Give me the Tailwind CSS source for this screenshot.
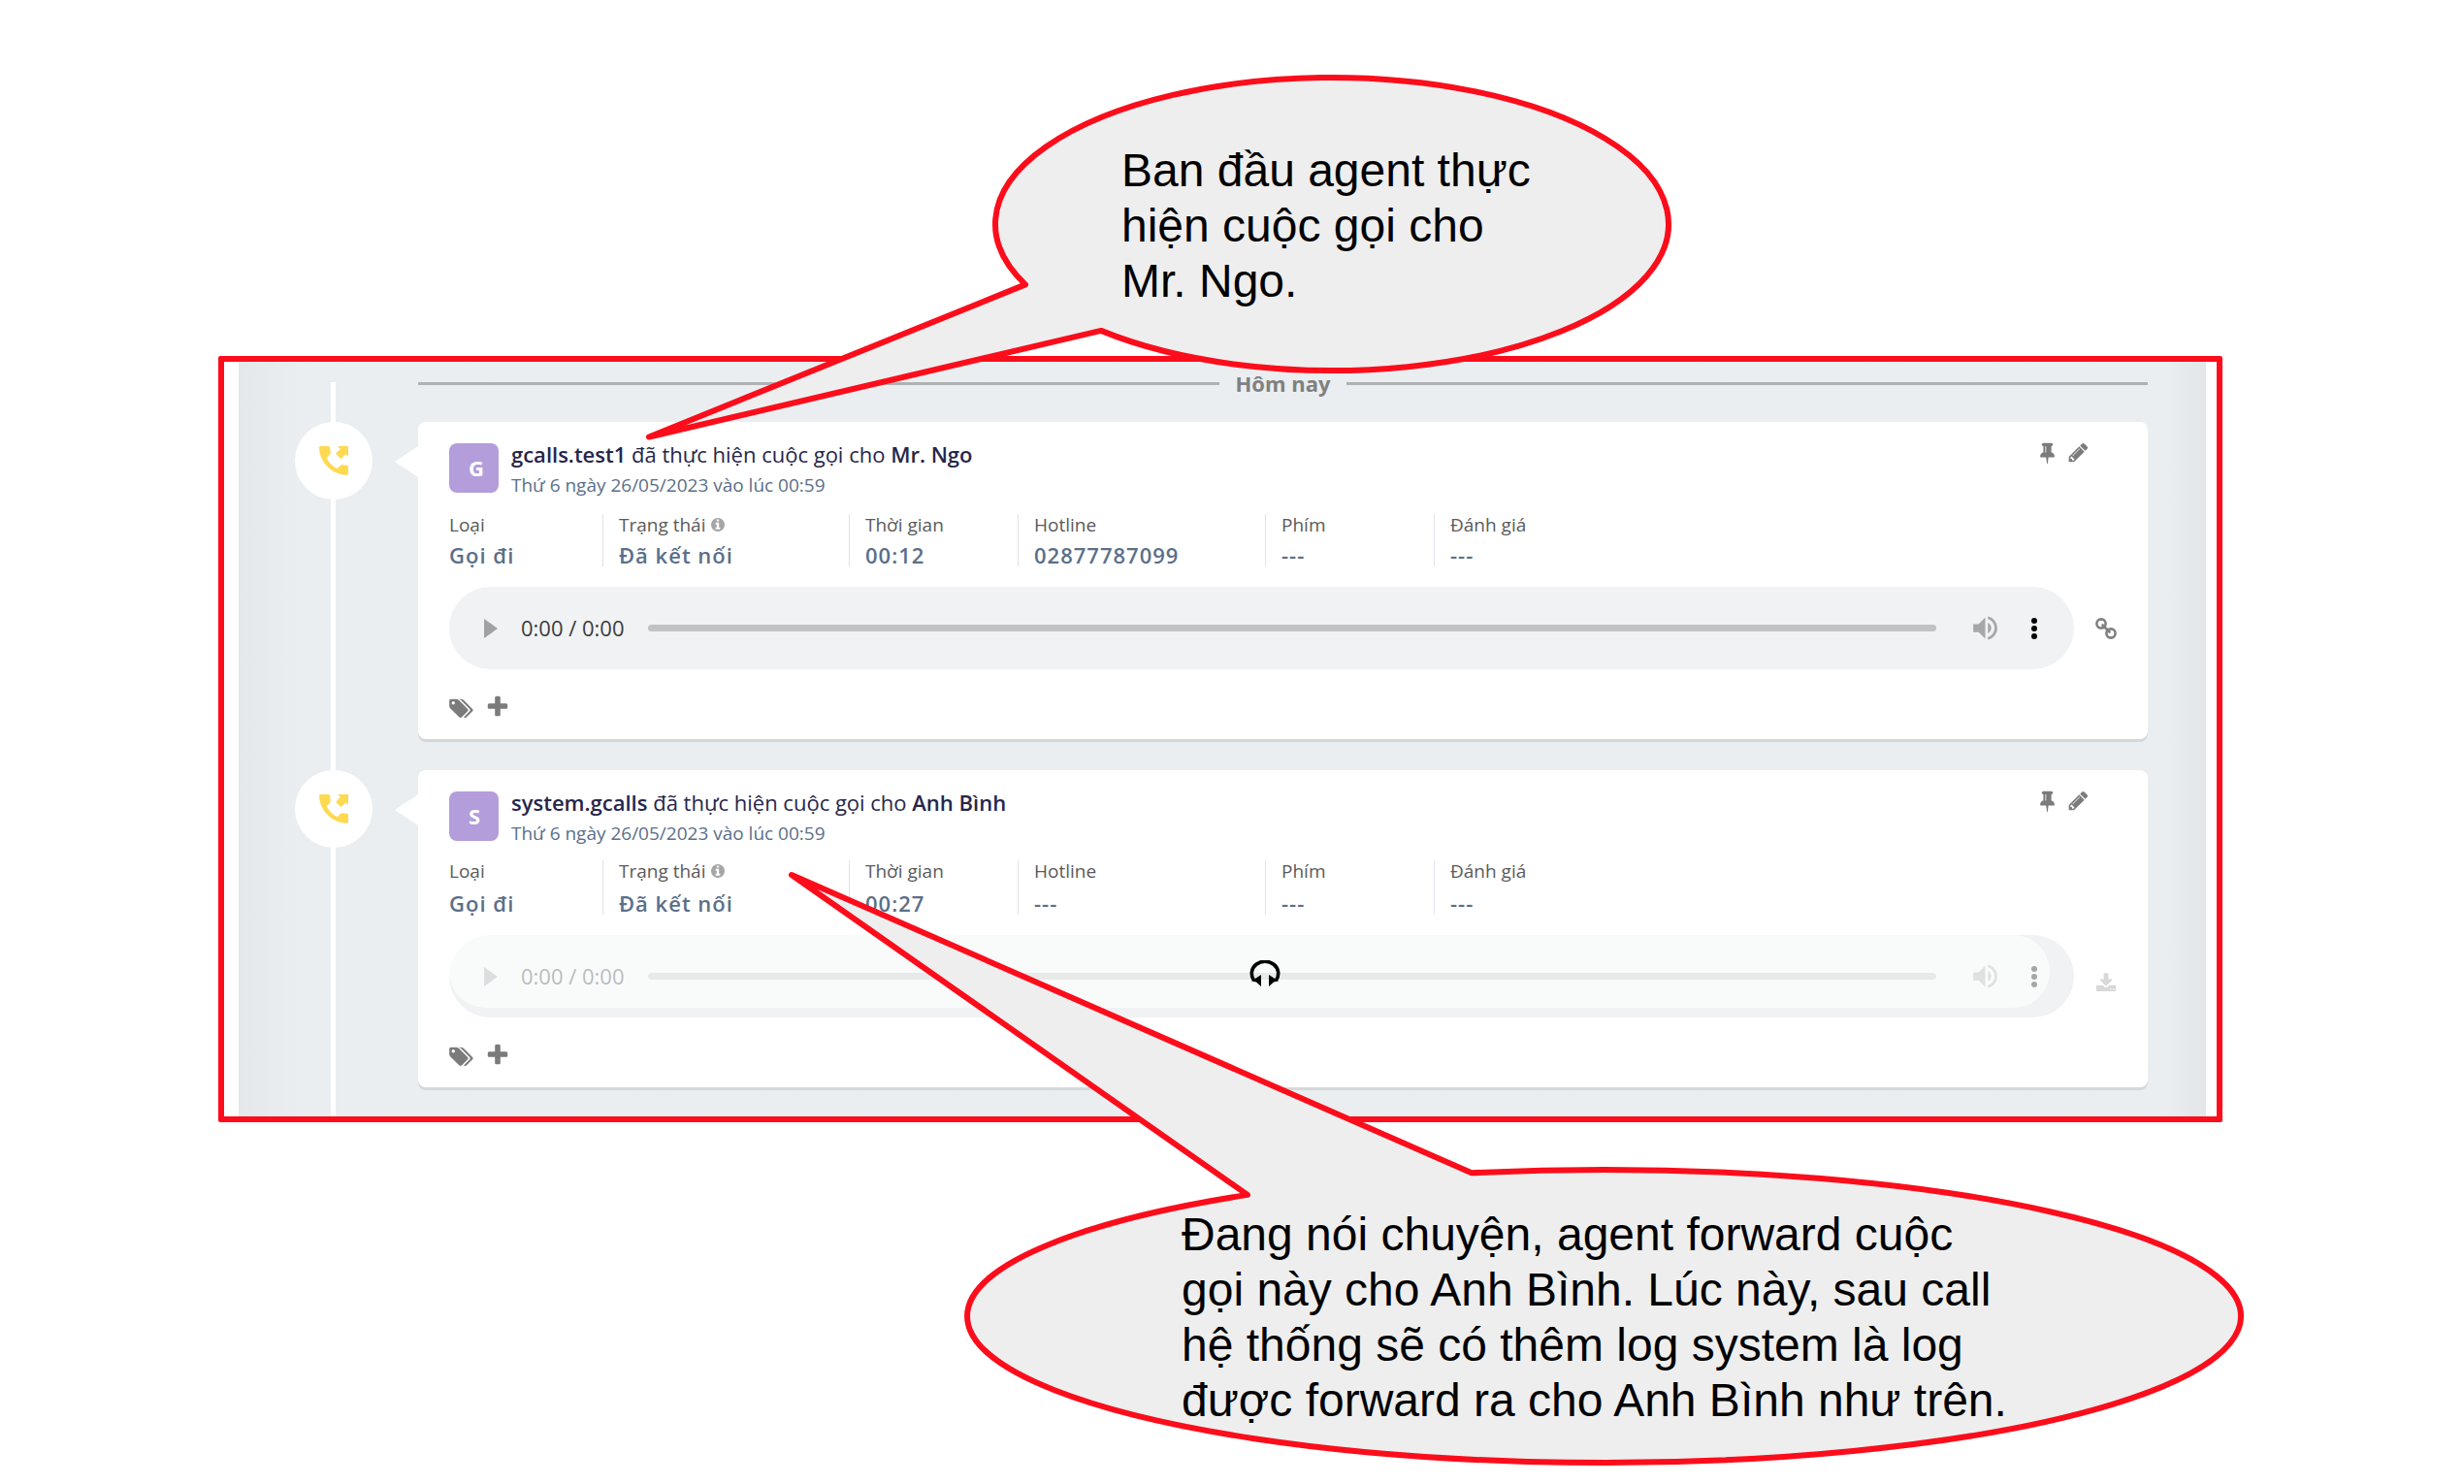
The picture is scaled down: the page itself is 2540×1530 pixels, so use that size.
<!DOCTYPE html>
<html lang="vi">
<head>
<meta charset="utf-8">
<meta name="viewport" content="width=device-width, initial-scale=1">
<title>Lịch sử cuộc gọi</title>
<script src="https://cdn.jsdelivr.net/npm/@tailwindcss/browser@4"></script>
</head>
<body class="bg-white font-['Open_Sans',sans-serif]">

<!-- Icon set -->
<svg class="hidden" aria-hidden="true">
  <symbol id="call" viewBox="0 0 24 24"><path d="M20.200 14.800l-2.600-.300a1.800 1.800 0 0 0-1.500.500l-1.900 1.900a15 15 0 0 1-6.600-6.600l1.900-1.900c.400-.400.600-1 .500-1.500L9.700 3.900A1 1 0 0 0 8.700 3H4C3.400 3 3 3.500 3 4.100 3.500 13.400 10.700 20.500 20 20.900c.600 0 1-.400 1-1v-4.100a1 1 0 0 0-.800-1zM14.400 3H21v6.600l-1.600-1.600-2.900 2.900-3.200-3.200L16.100 4.700z"/></symbol>
  <symbol id="pin" viewBox="0 0 1792 1792"><path d="M800 864v-448q0-14-9-23t-23-9-23 9-9 23v448q0 14 9 23t23 9 23-9 9-23zm672 352q0 26-19 45t-45 19h-429l-51 483q-2 12-10.500 20.500t-20.500 8.500h-1q-27 0-32-27l-76-485h-404q-26 0-45-19t-19-45q0-123 78.500-221.500t177.500-98.500v-512q-52 0-90-38t-38-90 38-90 90-38h640q52 0 90 38t38 90-38 90-90 38v512q99 0 177.500 98.500t78.500 221.500z"/></symbol>
  <symbol id="pencil" viewBox="0 0 1792 1792"><path d="M491 1536l91-91-235-235-91 91v107h128v128h107zm523-928q0-22-22-22-10 0-17 7l-542 542q-7 7-7 17 0 22 22 22 10 0 17-7l542-542q7-7 7-17zm-54-192l416 416-832 832h-416v-416zm683 96q0 53-37 90l-166 166-416-416 166-165q36-38 90-38 53 0 91 38l235 234q37 39 37 91z"/></symbol>
  <symbol id="info" viewBox="128 128 1536 1536"><path d="M1152 1376v-160q0-14-9-23t-23-9h-96v-512q0-14-9-23t-23-9h-320q-14 0-23 9t-9 23v160q0 14 9 23t23 9h96v320h-96q-14 0-23 9t-9 23v160q0 14 9 23t23 9h448q14 0 23-9t9-23zm-128-896v-160q0-14-9-23t-23-9h-192q-14 0-23 9t-9 23v160q0 14 9 23t23 9h192q14 0 23-9t9-23zm640 416q0 209-103 385.500t-279.500 279.500-385.500 103-385.500-103-279.500-279.500-103-385.500 103-385.500 279.500-279.500 385.500-103 385.500 103 279.500 279.500 103 385.500z"/></symbol>
  <symbol id="tags" viewBox="128 0 1920 1792"><path d="M576 448q0-53-37.500-90.500t-90.500-37.500-90.500 37.500-37.500 90.500 37.500 90.500 90.500 37.500 90.500-37.500 37.500-90.500zm1067 576q0 53-37 90l-491 492q-39 37-91 37-53 0-90-37l-715-716q-38-37-64.500-101t-26.500-117v-416q0-52 38-90t90-38h416q53 0 117 26.500t102 64.500l715 714q37 39 37 91zm384 0q0 53-37 90l-491 492q-39 37-91 37-36 0-59-14t-53-45l470-470q37-37 37-90 0-52-37-91l-715-714q-38-38-102-64.500t-117-26.500h224q53 0 117 26.500t102 64.500l715 714q37 39 37 91z"/></symbol>
  <symbol id="plus" viewBox="0 0 1792 1792"><path d="M1600 736v192q0 40-28 68t-68 28h-416v416q0 40-28 68t-68 28h-192q-40 0-68-28t-28-68v-416h-416q-40 0-68-28t-28-68v-192q0-40 28-68t68-28h416v-416q0-40 28-68t68-28h192q40 0 68 28t28 68v416h416q40 0 68 28t28 68z"/></symbol>
  <symbol id="download" viewBox="0 0 1792 1600"><path d="M1344 1344q0-26-19-45t-45-19-45 19-19 45 19 45 45 19 45-19 19-45zm256 0q0-26-19-45t-45-19-45 19-19 45 19 45 45 19 45-19 19-45zm128-224v320q0 40-28 68t-68 28h-1472q-40 0-68-28t-28-68v-320q0-40 28-68t68-28h465l135 136q58 56 136 56t136-56l136-136h464q40 0 68 28t28 68zm-325-569q17 41-14 70l-448 448q-18 19-45 19t-45-19l-448-448q-31-29-14-70 17-39 59-39h256v-448q0-26 19-45t45-19h256q26 0 45 19t19 45v448h256q42 0 59 39z"/></symbol>
  <symbol id="link" viewBox="0 0 22 22"><g fill="none" stroke="currentColor" stroke-width="2.600"><circle cx="6" cy="6" r="4.600"/><circle cx="16" cy="16" r="4.600"/><path d="M7.500 7.500l7 7" stroke-linecap="round"/></g></symbol>
  <symbol id="volume" viewBox="0 0 24 24"><path d="M3 9v6h4l5 5V4L7 9H3zm13.500 3c0-1.770-1.020-3.290-2.500-4.030v8.050c1.480-.730 2.500-2.250 2.500-4.020zM14 3.230v2.060c2.890.860 5 3.540 5 6.710s-2.110 5.850-5 6.710v2.060c4.010-.910 7-4.490 7-8.770s-2.990-7.860-7-8.770z"/></symbol>
  <symbol id="play" viewBox="0 0 14 20"><path d="M0 0l14 10L0 20z"/></symbol>
  <symbol id="dots" viewBox="0 0 8 24"><circle cx="4" cy="4" r="3"/><circle cx="4" cy="12" r="3"/><circle cx="4" cy="20" r="3"/></symbol>
  <symbol id="headphones" viewBox="0 0 32 28"><path d="M4.500 20.500A13.700 12.500 0 1 1 27.500 20.500" fill="none" stroke="currentColor" stroke-width="3.600"/><path d="M2 21.500L12 15v12l-5-4.500zM30 21.500L20 15v12l5-4.500z"/></symbol>
</svg>

<main class="relative pt-[367px] pl-[225px] pr-[249px] pb-[373px]">

  <!-- Call history -->
  <section class="rounded-xs border-6 border-[#fc0d1b] pl-[15px] pr-[11px]">
    <div class="relative bg-[#eaeef1] bg-linear-to-r from-[#e4e8eb] via-[#eaeef1] via-3% to-[#eaeef1] pl-[58px] pr-[60px] pt-[7px] pb-[30px]">
      <div class="absolute inset-y-0 right-0 w-10 bg-linear-to-l from-[#e2e6e9] to-[#eaeef1]"></div>
      <div class="absolute left-[95px] top-[21px] bottom-0 w-[5px] bg-white"></div>

      <h2 class="mb-[25px] ml-[127px] flex items-center gap-4 text-[22px] leading-[30px] font-bold text-[#808080] before:h-[3px] before:flex-1 before:bg-[#b0b1b2] after:h-[3px] after:flex-1 after:bg-[#b0b1b2]">Hôm nay</h2>

      <ol class="relative flex flex-col gap-8">
        <li class="flex gap-[47px]">
          <div class="flex size-20 shrink-0 items-center justify-center rounded-full bg-white text-[#ffd94f]"><svg class="size-10 fill-current"><use href="#call"/></svg></div>
          <article class="relative flex-1 rounded-lg bg-white px-8 pt-[17px] pb-5 shadow-[0_3px_0_#d4d8db]">
            <svg class="absolute top-[25px] -left-6 h-8 w-6 fill-white" viewBox="0 0 24 32"><path d="M24 0v32L0 16z"/></svg>
            <header class="flex">
              <div class="mt-[5px] mr-[13px] size-[51px] rounded-lg bg-[#b39ddb] pl-5 text-[22px] leading-[51px] font-bold text-white">G</div>
              <div class="flex-1 leading-8">
                <h3 class="text-[22px] text-[#27264a]"><b class="font-semibold">gcalls.test1</b> đã thực hiện cuộc gọi cho <b class="font-semibold">Mr. Ngo</b></h3>
                <p class="text-[19px] text-[#5b6f8a]">Thứ 6 ngày 26/05/2023 vào lúc 00:59</p>
              </div>
              <div class="mt-[3px] mr-7 flex items-start gap-[9px] text-[#7b7b7b]">
                <button type="button" aria-label="Ghim"><svg class="size-[23px] fill-current"><use href="#pin"/></svg></button>
                <button type="button" aria-label="Sửa"><svg class="size-[23px] fill-current"><use href="#pencil"/></svg></button>
              </div>
            </header>
            <dl class="mt-[14px] flex h-[54px] text-[#5b6f8a]">
              <div class="flex w-[158px] flex-col justify-between"><dt class="text-[19px] leading-[22px] text-[#5a5a5a]">Loại</dt><dd class="text-[22px] leading-6 font-semibold tracking-[1px]">Gọi đi</dd></div>
              <div class="flex w-[254px] flex-col justify-between border-l border-[#e0e3ef] pl-4"><dt class="flex items-center gap-[6px] text-[19px] leading-[22px] text-[#5a5a5a]">Trạng thái<svg class="size-[14px] fill-[#a6a6a6]"><use href="#info"/></svg></dt><dd class="text-[22px] leading-6 font-semibold tracking-[1px]">Đã kết nối</dd></div>
              <div class="flex w-[174px] flex-col justify-between border-l border-[#e0e3ef] pl-4"><dt class="text-[19px] leading-[22px] text-[#5a5a5a]">Thời gian</dt><dd class="text-[22px] leading-6 font-semibold tracking-[1px]">00:12</dd></div>
              <div class="flex w-[255px] flex-col justify-between border-l border-[#e0e3ef] pl-4"><dt class="text-[19px] leading-[22px] text-[#5a5a5a]">Hotline</dt><dd class="text-[22px] leading-6 font-semibold tracking-[1px]">02877787099</dd></div>
              <div class="flex w-[174px] flex-col justify-between border-l border-[#e0e3ef] pl-4"><dt class="text-[19px] leading-[22px] text-[#5a5a5a]">Phím</dt><dd class="text-[22px] leading-6 font-semibold tracking-[1px]">---</dd></div>
              <div class="flex flex-col justify-between border-l border-[#e0e3ef] pl-4"><dt class="text-[19px] leading-[22px] text-[#5a5a5a]">Đánh giá</dt><dd class="text-[22px] leading-6 font-semibold tracking-[1px]">---</dd></div>
            </dl>
            <div class="mt-[21px] flex items-center gap-[22px]">
              <div class="flex h-[85px] flex-1 items-center rounded-full bg-[#f0f2f4] pr-[37px] pl-9">
                <button type="button" aria-label="Phát"><svg class="h-5 w-[14px] fill-[#a0a2a3]"><use href="#play"/></svg></button>
                <span class="ml-6 w-[131px] pb-[2px] text-[22px] leading-8 text-[#3c3c3c]">0:00 / 0:00</span>
                <input type="range" value="0" aria-label="Tiến trình" class="h-[7px] min-w-0 flex-1 appearance-none rounded-full bg-[#c0c2c3] [&::-webkit-slider-thumb]:size-0 [&::-webkit-slider-thumb]:appearance-none">
                <button type="button" aria-label="Âm lượng" class="ml-[34px]"><svg class="size-[33px] fill-[#a5a7a8]"><use href="#volume"/></svg></button>
                <button type="button" aria-label="Tùy chọn khác" class="ml-[30px]"><svg class="h-6 w-2 fill-black"><use href="#dots"/></svg></button>
              </div>
              <a href="#" aria-label="Liên kết"><svg class="size-[22px] text-[#808080]"><use href="#link"/></svg></a>
            </div>
            <div class="mt-[26px] flex h-[26px] items-center gap-3 text-[#7b7b7b]">
              <svg class="mt-[2px] h-[23px] w-[25px] fill-current"><use href="#tags"/></svg>
              <button type="button" aria-label="Thêm thẻ"><svg class="size-[26px] fill-current"><use href="#plus"/></svg></button>
            </div>
          </article>
        </li>

        <li class="flex gap-[47px]">
          <div class="flex size-20 shrink-0 items-center justify-center rounded-full bg-white text-[#ffd94f]"><svg class="size-10 fill-current"><use href="#call"/></svg></div>
          <article class="relative flex-1 rounded-lg bg-white px-8 pt-[17px] pb-5 shadow-[0_3px_0_#d4d8db]">
            <svg class="absolute top-[25px] -left-6 h-8 w-6 fill-white" viewBox="0 0 24 32"><path d="M24 0v32L0 16z"/></svg>
            <header class="flex">
              <div class="mt-[5px] mr-[13px] size-[51px] rounded-lg bg-[#b39ddb] pl-5 text-[22px] leading-[51px] font-bold text-white">S</div>
              <div class="flex-1 leading-8">
                <h3 class="text-[22px] text-[#27264a]"><b class="font-semibold">system.gcalls</b> đã thực hiện cuộc gọi cho <b class="font-semibold">Anh Bình</b></h3>
                <p class="text-[19px] text-[#5b6f8a]">Thứ 6 ngày 26/05/2023 vào lúc 00:59</p>
              </div>
              <div class="mt-[3px] mr-7 flex items-start gap-[9px] text-[#7b7b7b]">
                <button type="button" aria-label="Ghim"><svg class="size-[23px] fill-current"><use href="#pin"/></svg></button>
                <button type="button" aria-label="Sửa"><svg class="size-[23px] fill-current"><use href="#pencil"/></svg></button>
              </div>
            </header>
            <dl class="mt-3 flex h-14 text-[#5b6f8a]">
              <div class="flex w-[158px] flex-col justify-between"><dt class="text-[19px] leading-[22px] text-[#5a5a5a]">Loại</dt><dd class="text-[22px] leading-6 font-semibold tracking-[1px]">Gọi đi</dd></div>
              <div class="flex w-[254px] flex-col justify-between border-l border-[#e0e3ef] pl-4"><dt class="flex items-center gap-[6px] text-[19px] leading-[22px] text-[#5a5a5a]">Trạng thái<svg class="size-[14px] fill-[#a6a6a6]"><use href="#info"/></svg></dt><dd class="text-[22px] leading-6 font-semibold tracking-[1px]">Đã kết nối</dd></div>
              <div class="flex w-[174px] flex-col justify-between border-l border-[#e0e3ef] pl-4"><dt class="text-[19px] leading-[22px] text-[#5a5a5a]">Thời gian</dt><dd class="text-[22px] leading-6 font-semibold tracking-[1px]">00:27</dd></div>
              <div class="flex w-[255px] flex-col justify-between border-l border-[#e0e3ef] pl-4"><dt class="text-[19px] leading-[22px] text-[#5a5a5a]">Hotline</dt><dd class="text-[22px] leading-6 font-semibold tracking-[1px]">---</dd></div>
              <div class="flex w-[174px] flex-col justify-between border-l border-[#e0e3ef] pl-4"><dt class="text-[19px] leading-[22px] text-[#5a5a5a]">Phím</dt><dd class="text-[22px] leading-6 font-semibold tracking-[1px]">---</dd></div>
              <div class="flex flex-col justify-between border-l border-[#e0e3ef] pl-4"><dt class="text-[19px] leading-[22px] text-[#5a5a5a]">Đánh giá</dt><dd class="text-[22px] leading-6 font-semibold tracking-[1px]">---</dd></div>
            </dl>
            <div class="mt-[21px] flex items-center gap-[22px]">
              <div class="relative flex h-[85px] flex-1 items-center rounded-full bg-[#f0f2f4] pr-[37px] pl-9">
                <button type="button" aria-label="Phát"><svg class="h-5 w-[14px] fill-[#a0a2a3]"><use href="#play"/></svg></button>
                <span class="ml-6 w-[131px] pb-[2px] text-[22px] leading-8 text-[#3c3c3c]">0:00 / 0:00</span>
                <input type="range" value="0" aria-label="Tiến trình" class="h-[7px] min-w-0 flex-1 appearance-none rounded-full bg-[#c0c2c3] [&::-webkit-slider-thumb]:size-0 [&::-webkit-slider-thumb]:appearance-none">
                <button type="button" aria-label="Âm lượng" class="ml-[34px]"><svg class="size-[33px] fill-[#a5a7a8]"><use href="#volume"/></svg></button>
                <button type="button" aria-label="Tùy chọn khác" class="ml-[30px]"><svg class="h-6 w-2 fill-black"><use href="#dots"/></svg></button>
                <!-- Loading cover over the player -->
                <div class="absolute top-0 right-[25px] bottom-[10px] left-0 rounded-full bg-[#feffff]/65"></div>
                <button type="button" aria-label="Nghe lại" class="absolute top-[26px] left-1/2 -ml-[13px]"><svg class="h-7 w-8 fill-current text-black"><use href="#headphones"/></svg></button>
              </div>
              <a href="#" aria-label="Tải xuống"><svg class="mt-3 size-[22px] fill-[#d8d8d8]"><use href="#download"/></svg></a>
            </div>
            <div class="mt-[26px] flex h-[26px] items-center gap-3 text-[#7b7b7b]">
              <svg class="mt-[2px] h-[23px] w-[25px] fill-current"><use href="#tags"/></svg>
              <button type="button" aria-label="Thêm thẻ"><svg class="size-[26px] fill-current"><use href="#plus"/></svg></button>
            </div>
          </article>
        </li>
      </ol>
    </div>
  </section>

  <!-- Speech bubbles pinned over the call history -->
  <aside class="absolute top-[70px] left-[660px] font-['Liberation_Sans',Arial,sans-serif]">
    <svg class="h-[390px] w-[1070px]" viewBox="660 70 1070 390"><path d="M1057 293.400L669 450.500L1135 340.900A347 151 0 1 0 1057 293.400z" fill="#eee" stroke="#fc0d1b" stroke-width="6" stroke-linejoin="round"/></svg>
    <p class="absolute top-[77px] left-[496px] text-[48px] leading-[57px] whitespace-nowrap text-black">Ban đầu agent thực<br>hiện cuộc gọi cho<br>Mr. Ngo.</p>
  </aside>
  <aside class="absolute top-[890px] left-[800px] font-['Liberation_Sans',Arial,sans-serif]">
    <svg class="h-[630px] w-[1520px]" viewBox="800 890 1520 630"><path d="M1286 1231.880L816 902L1517 1209.300A656.500 151 0 1 1 1286 1231.880z" fill="#eee" stroke="#fc0d1b" stroke-width="6" stroke-linejoin="round"/></svg>
    <p class="absolute top-[354px] left-[418px] text-[48px] leading-[57px] whitespace-nowrap text-black">Đang nói chuyện, agent forward cuộc<br>gọi này cho Anh Bình. Lúc này, sau call<br>hệ thống sẽ có thêm log system là log<br>được forward ra cho Anh Bình như trên.</p>
  </aside>
</main>
</body>
</html>
